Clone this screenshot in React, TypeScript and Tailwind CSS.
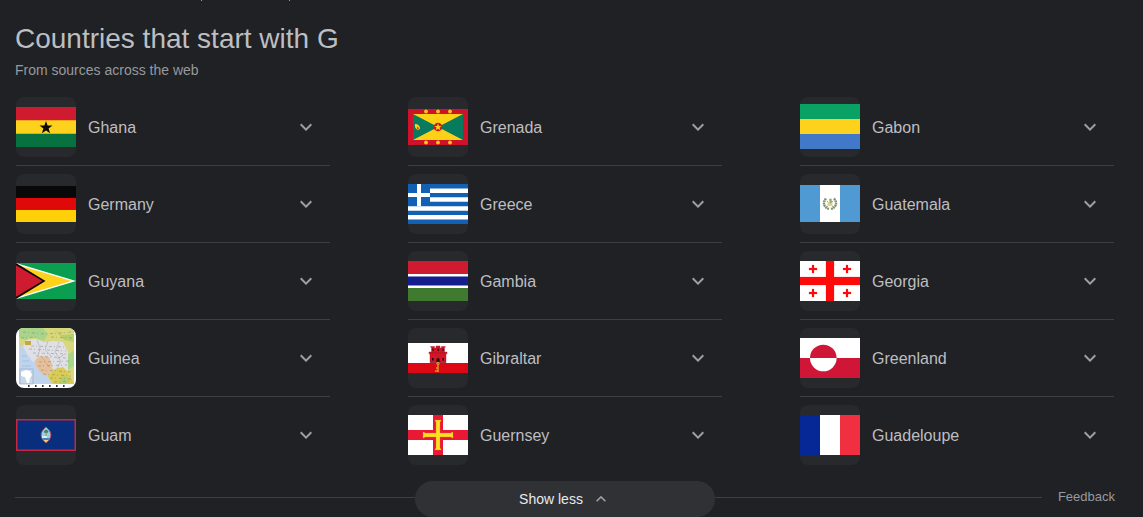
import type { ReactNode } from 'react';

const flags: Record<string, ReactNode> = {
  Ghana: (
    <>
      <path fill="#cf1b2f" d="M0 10h60v14H0z" />
      <path fill="#fcd21c" d="M0 23.3h60v14H0z" />
      <path fill="#07713f" d="M0 36.7h60V50H0z" />
      <path fill="#0b0b0b" d="M30 24l1.6 4.6h4.9l-3.9 2.9 1.5 4.7-4.1-2.8-4.1 2.8 1.5-4.7-3.9-2.9h4.9z" />
    </>
  ),
  Grenada: (
    <>
      <path fill="#cf1229" d="M0 12h60v36H0z" />
      <path fill="#fcd116" d="M5 17h50v26H5z" />
      <path fill="#087a5e" d="M5 17l25 13L5 43zM55 17L30 30l25 13z" />
      <circle cx="30" cy="30" r="4.3" fill="#cf1229" />
      <path fill="#fcd116" d="M30 26.2l.9 2.7h2.8l-2.2 1.7.8 2.7-2.3-1.6-2.3 1.6.8-2.7-2.2-1.7h2.8z" />
      <path fill="#fcd116" d="M7 27c3 0 5 2 5 4.5c-2 3-6 0-5-4.5z" />
      <path fill="#cf1229" d="M9.5 29.5l1.5 2-2 .5z" />
      {[18, 30, 42].map((x) => (
        <g key={x} fill="#f9c51c">
          <circle cx={x} cy="14.5" r="1.9" />
          <circle cx={x} cy="45.5" r="1.9" />
        </g>
      ))}
    </>
  ),
  Gabon: (
    <>
      <path fill="#0aa165" d="M0 7h60v15H0z" />
      <path fill="#fcd21c" d="M0 22h60v15H0z" />
      <path fill="#4179c8" d="M0 37h60v15H0z" />
    </>
  ),
  Germany: (
    <>
      <path fill="#080808" d="M0 12h60v12H0z" />
      <path fill="#df0909" d="M0 24h60v12H0z" />
      <path fill="#ffd008" d="M0 36h60v12H0z" />
    </>
  ),
  Greece: (
    <>
      <path fill="#fff" d="M0 10h60v40H0z" />
      <path
        fill="#1260b4"
        d="M0 10h60v4.4H0zM22 18.9h38v4.4H22zM22 27.8h38v4.4H22zM0 36.7h60v4.4H0zM0 45.6h60V50H0zM0 10h22v22.2H0z"
      />
      <path fill="#fff" d="M9 10h4v22.2H9zM0 19h22v4H0z" />
    </>
  ),
  Guatemala: (
    <>
      <path fill="#509ad3" d="M0 11h60v37H0z" />
      <path fill="#fff" d="M20 11h20v37H20z" />
      <g fill="none">
        <path stroke="#7f9274" strokeWidth="2.4" strokeDasharray="1.8 .5" d="M26 24.5c-3.500 4-2.500 8.500 3 10.500M34 24.5c3.500 4 2.500 8.500-3 10.500" />
        <path stroke="#a5a68b" strokeWidth="1" d="M27 33l6-6M33 33l-6-6" />
      </g>
      <path fill="#e5cf82" d="M27.5 28h5v4h-5z" />
      <path fill="#8bab72" d="M29 25l2.5-.5.5 4-2 1z" />
    </>
  ),
  Guyana: (
    <>
      <path fill="#0a9f50" d="M0 12h60v36H0z" />
      <path fill="#fff" d="M0 12l60 18L0 48z" />
      <path fill="#fcd21c" d="M0 13.5L55.5 30 0 46.5z" />
      <path fill="#060606" d="M0 12l29.5 18L0 48z" />
      <path fill="#cf1b2f" d="M0 14.2L26.5 30 0 45.8z" />
    </>
  ),
  Gambia: (
    <>
      <path fill="#fff" d="M0 10h60v40H0z" />
      <path fill="#cf1b2f" d="M0 10h60v13H0z" />
      <path fill="#141e8c" d="M0 25.6h60v8.8H0z" />
      <path fill="#3f7a2e" d="M0 37h60v13H0z" />
    </>
  ),
  Georgia: (
    <>
      <path fill="#fff" d="M0 10h60v40H0z" />
      <path
        fill="#fe0a0a"
        stroke="#fe0a0a"
        strokeWidth=".2"
        d="M26 10h8v16h26v8H34v16h-8V34H0v-8h26zM12 14h2v3h3v2h-3v3h-2v-3H9v-2h3zM46 14h2v3h3v2h-3v3h-2v-3h-3v-2h3zM12 38h2v3h3v2h-3v3h-2v-3H9v-2h3zM46 38h2v3h3v2h-3v3h-2v-3h-3v-2h3z"
      />
    </>
  ),
  Guinea: (
    <>
      <path fill="#fff" d="M0 0h60v60H0z" />
      <path fill="#d9d77c" d="M3 0h55v56H3z" />
      <path fill="#a9d58b" d="M3 0h24l5 6-4 7-12-4-7 3-6-3zM50 28l8-6v16l-6 4z" />
      <path fill="#bfd3ed" d="M3 18l7 1 3 9 8 5 2 9 8 6 5 8H3z" />
      <path fill="#dfe0e6" d="M7 18l4-6 9-1 8 3 9-1 10 1 5 10v18l-9 4-7-6-4-8-9-1-6 3-6-8z" />
      <path fill="#e7c09b" d="M19 32l5-4 9 1 3 7v6l-6 6-6-4-4-6z" />
      <path fill="#dacb58" d="M39 41l8-2 6 6 5 11H37l-5-8z" />
      <path fill="#b5cf6a" d="M47 47l6 3-2 6h-8zM39 2l7 5 12-1v8l-10-2z" />
      <path fill="#c6a744" d="M9 13h6v4H9z" />
      <g fill="none" stroke="#6d6a61" strokeWidth=".7" strokeDasharray="3 2 1 3" opacity=".55">
        <path d="M7 4l22 2 27-2M5 10l18-1M35 9l21 1M15 18l33 1M13 21l37 2M17 25l36 1M20 28l30 2M23 34l32-1M22 38l29-1M25 42l31 2M27 46l28 2M34 50l22 1M38 54l18-1" />
      </g>
      <path fill="none" stroke="#9b8f87" strokeWidth=".4" d="M21 12l3 8-2 8M32 13l-3 9 7 7M43 14l-4 10 6 9-4 8M49 26l-8 5M25 28l8 11" />
      <path fill="none" stroke="#8fb0d6" strokeWidth=".5" d="M6 28h5M6 33h7M6 38h9" />
      <path fill="#c7d8ed" stroke="#8ea5c2" strokeWidth=".6" d="M4 41h13v15H4z" />
      <path fill="#fff" d="M5 44l5-2 4 1 2 4-2 3-1 5h-2l-2-6-4-1z" />
      <path stroke="#333" strokeWidth="2" strokeDasharray="1.6 5.4" d="M12 58h38" />
    </>
  ),
  Gibraltar: (
    <>
      <path fill="#fff" d="M0 15h60v20H0z" />
      <path fill="#dc0914" d="M0 35h60v10H0z" />
      <path
        fill="#d51427"
        stroke="#8d1822"
        strokeWidth=".4"
        d="M22 34.5v-8l-1-1v-1.500h2.500V20L22.500 18.500h4V20H28v-2h4v2h1.500v-1.500h4L36.500 20v4H39v1.500l-1 1v8z"
      />
      <path fill="#18090a" d="M24.5 20.5h1v2.500h-1zM29.5 20.5h1.2v2.500h-1.2zM34.5 20.5h1v2.500h-1zM24 30h1.500v2.500H24zM34.500 30H36v2.500h-1.500zM28.500 34v-2.500a1.500 1.500 0 013 0V34z" />
      <path stroke="#8d1822" strokeWidth=".6" d="M23 25h14M22 34.5h16" />
      <path fill="none" stroke="#d59a25" strokeWidth="1.4" d="M30 34v10M30 43h-3M30 40h-2" />
      <circle cx="30" cy="35.5" r="1.3" fill="none" stroke="#d59a25" />
    </>
  ),
  Greenland: (
    <>
      <path fill="#fff" d="M0 10h60v20H0z" />
      <path fill="#d01637" d="M0 30h60v20H0z" />
      <path fill="#d01637" d="M10 30a13.3 13.3 0 0126.6 0z" />
      <path fill="#fff" d="M10 30a13.3 13.3 0 0026.6 0z" />
    </>
  ),
  Guam: (
    <>
      <path fill="#c8253f" d="M0 14h60v32H0z" />
      <path fill="#092e7d" d="M1.5 15.5h57v29h-57z" />
      <path fill="#92d2e6" stroke="#cc4052" strokeWidth=".8" d="M30 22c6.500 5 6.500 11 0 16-6.500-5-6.500-11 0-16z" />
      <path fill="#368b61" d="M28 26l2-1.500 2.500 1.500-1 2h-3z" />
      <path fill="#9a7c66" d="M29.7 27h.8v6h-.8z" />
      <path fill="#d9efe9" d="M26 31h5v2h-5z" />
      <path fill="#3d86bd" d="M26.5 33h7l-1 2h-5z" />
      <path fill="#efd06b" d="M27.5 35h5L30 37.3z" />
    </>
  ),
  Guernsey: (
    <>
      <path fill="#fff" d="M0 10h60v40H0z" />
      <path fill="#e91834" d="M25 10h10v15h25v10H35v15H25V35H0V25h25z" />
      <path
        fill="#fbdf20"
        stroke="#e0861c"
        strokeWidth=".3"
        d="M27 15h6v1l-1 1v11h11l1-1h1v6h-1l-1-1H32v11l1 1v1h-6v-1l1-1V32H17l-1 1h-1v-6h1l1 1h11V17l-1-1z"
      />
    </>
  ),
  Guadeloupe: (
    <>
      <path fill="#052896" d="M0 10h20v40H0z" />
      <path fill="#fff" d="M20 10h20v40H20z" />
      <path fill="#f03040" d="M40 10h20v40H40z" />
    </>
  )
};

const countries = [
  'Ghana', 'Grenada', 'Gabon',
  'Germany', 'Greece', 'Guatemala',
  'Guyana', 'Gambia', 'Georgia',
  'Guinea', 'Gibraltar', 'Greenland',
  'Guam', 'Guernsey', 'Guadeloupe'
];

function CountryRow({ name, divider }: { name: string; divider: boolean }) {
  return (
    <button
      type="button"
      aria-expanded={false}
      className={`flex w-full items-center gap-3 py-2 pr-3 text-left ${divider ? 'border-b border-[#3c4043]' : ''}`}
    >
      <span className="size-15 shrink-0 overflow-hidden rounded-lg bg-[#28292c]">
        <svg viewBox="0 0 60 60" className="size-15" aria-hidden="true">
          {flags[name]}
        </svg>
      </span>
      <span className="flex-1 pt-0.5 text-base text-[#bdbec1]">{name}</span>
      <svg viewBox="0 0 24 24" className="size-6 shrink-0 fill-[#9aa0a6]" aria-hidden="true">
        <path d="M7.41 8.59L12 13.17l4.59-4.58L18 10l-6 6-6-6z" />
      </svg>
    </button>
  );
}

export default function App() {
  return (
    <main className="min-h-screen bg-[#202124] pr-7 pl-[15px] font-['Liberation_Sans',Arial,sans-serif]">
      {/* tail of the section above */}
      <div className="flex h-px gap-[87px] pl-[186px]" aria-hidden="true">
        <span className="w-px bg-[#9aa0a6]" />
        <span className="w-px bg-[#9aa0a6]" />
      </div>

      <header className="pt-5">
        <h1 className="text-[28px] leading-9 text-[#bdbec1]">Countries that start with G</h1>
        <p className="mt-[3px] text-sm leading-5 text-[#96999e]">From sources across the web</p>
      </header>

      <div className="mx-px mt-[9px] grid grid-cols-3 gap-x-[78px]">
        {countries.map((name, i) => (
          <CountryRow key={name} name={name} divider={i < countries.length - 3} />
        ))}
      </div>

      <footer className="mt-2 flex items-start">
        <div className="flex h-8 flex-1 items-center">
          <hr className="flex-1 border-[#3c4043]" />
        </div>
        <button
          type="button"
          className="flex h-9 w-[300px] items-center justify-center gap-2 rounded-full bg-[#303134] text-sm text-[#e8eaed]"
        >
          Show less
          <svg viewBox="0 0 24 24" className="size-5 fill-[#9aa0a6]" aria-hidden="true">
            <path d="M7.41 15.41L12 10.83l4.59 4.58L18 14l-6-6-6 6z" />
          </svg>
        </button>
        <div className="flex h-8 flex-1 items-center gap-4">
          <hr className="flex-1 border-[#3c4043]" />
          <a href="#feedback" className="text-[13px] leading-4 text-[#96999e]">
            Feedback
          </a>
        </div>
      </footer>
    </main>
  );
}
